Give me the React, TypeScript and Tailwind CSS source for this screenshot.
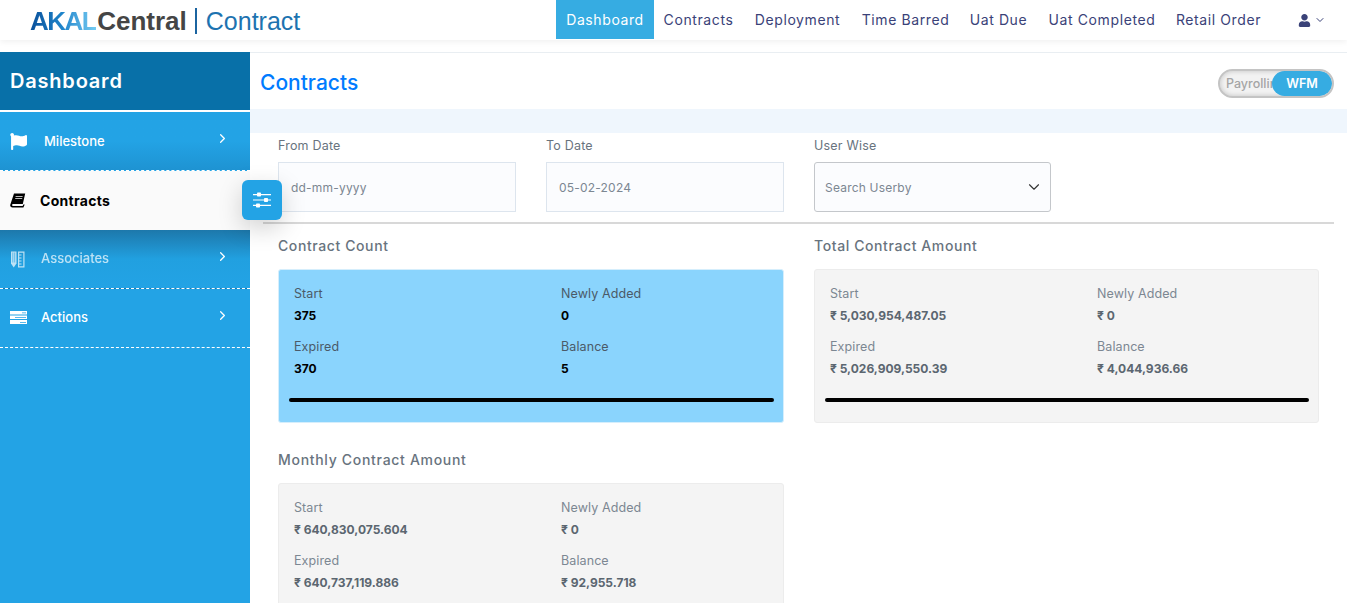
import { FaFlag, FaUser } from 'react-icons/fa';
import { LuChevronDown, LuChevronRight } from 'react-icons/lu';

const navItems: [string, string][] = [
  ['Dashboard', 'w-[98px]'],
  ['Contracts', 'w-[89px]'],
  ['Deployment', 'w-[109px]'],
  ['Time Barred', 'w-[107px]'],
  ['Uat Due', 'w-[79px]'],
  ['Uat Completed', 'w-[128px]'],
  ['Retail Order', 'w-[105px]'],
];

const BookIcon = () => (
  <svg width="16" height="15" viewBox="0 0 16 14" fill="currentColor">
    <path d="M4 0h11.200l-2.400 10.600H3.400c-.9 0-1.300.5-1.400 1 0 .5.4.9 1.100.9h9.600l.6-1.400h1.400L13.400 14H2.600C1 14 0 13 .2 11.600Z" />
    <path d="M5.600 2.400h7v.9h-7zM5.200 4.400h7v.9h-7z" fill="#fafafa" />
  </svg>
);

const RulerIcon = () => (
  <svg width="15" height="17" viewBox="0 0 15 16" fill="currentColor">
    <path d="M1 0h5.500v12L3.700 16 1 12Z" />
    <path d="M2.800 1v10M4.700 1v10" stroke="#23a3e5" strokeWidth=".6" />
    <path d="M8 0h6.500v16H8Zm1.200 1.200v13.600h4.100V1.200Z" />
    <path d="M9 3h2.500v1H9Zm0 3h2.500v1H9Zm0 3h2.500v1H9Zm0 3h2.500v1H9Z" />
  </svg>
);

const ListIcon = () => (
  <svg width="17" height="14" viewBox="0 0 17 14" fill="currentColor">
    <path d="M0 0h17v3.500H0ZM0 4.500h17V8H0ZM0 9h17v4H0Z" />
    <path d="M12 1.500h4v.7h-4zM5 6h11v.7H5zM10 11h6v.7h-6z" fill="#23a3e5" />
  </svg>
);

const SlidersIcon = () => (
  <svg width="18" height="16" viewBox="0 0 18 16" fill="currentColor">
    <path d="M0 2h18v1.200H0ZM0 7.400h18v1.200H0ZM0 12.800h18V14H0Z" />
    <rect x="4" y="0.500" width="4" height="4" rx="0.800" />
    <rect x="11" y="6" width="4" height="4" rx="0.800" />
    <rect x="3" y="11.500" width="4" height="4" rx="0.800" />
  </svg>
);

const SideItem = ({ label, icon, textClass, bg, dim }: { label: string; icon: React.ReactNode; textClass: string; bg: string; dim?: boolean }) => (
  <div className={`flex h-[59px] items-center border-b border-dashed border-white pl-[10px] pr-[20px] text-[13px] font-medium text-white ${bg}`}>
    <span className={`w-[17px] ${dim ? 'opacity-70' : ''}`}>{icon}</span>
    <span className={`${textClass} ${dim ? 'opacity-70' : ''}`}>{label}</span>
    <LuChevronRight className="ml-auto mb-[6px] text-[15px]" />
  </div>
);

const Stat = ({ label, value, dark }: { label: string; value: string; dark?: boolean }) => (
  <div className="h-[53px]">
    <div className={`text-[12.500px] leading-[18px] tracking-[0.100px] ${dark ? 'text-[#4b5a68]' : 'text-[#7c8792]'}`}>{label}</div>
    <div className={`mt-[4px] text-[12px] font-bold leading-[18px] ${dark ? 'text-black' : 'text-[#5b6670]'}`}>{value}</div>
  </div>
);

const StatCard = ({ stats, blue, line = true }: { stats: [string, string][]; blue?: boolean; line?: boolean }) => (
  <div className={`h-[154px] rounded-[3px] border px-[15px] pt-[15px] ${blue ? 'border-[#d5eefc] bg-[#8ad4fd]' : 'border-[#ececec] bg-[#f4f4f4]'}`}>
    <div className="grid grid-cols-[267px_1fr]">
      {stats.map(([label, value]) => (
        <Stat key={label} label={label} value={value} dark={blue} />
      ))}
    </div>
    {line && <div className="-ml-[5px] -mr-[6px] mt-[7px] h-[4px] rounded-full bg-black" />}
  </div>
);

const Field = ({ label, value, select }: { label: string; value: string; select?: boolean }) => (
  <div className={select ? 'w-[237px]' : 'w-[238px]'}>
    <div className="pt-[1px] text-[12.500px] leading-[17px] tracking-[0.200px] text-[#68737e]">{label}</div>
    <div className={`mt-[8px] flex h-[50px] items-center justify-between border bg-[#fbfcfe] pt-[2px] text-[12px] tracking-[0.200px] text-[#7c8792] ${select ? 'rounded-[3px] border-[#c4c7cb] pl-[10px] pr-[7px]' : 'border-[#dde5ee] pl-[12px]'}`}>
      {value}
      {select && <LuChevronDown strokeWidth={1.500} className="-mt-[2px] text-[18px] text-[#333]" />}
    </div>
  </div>
);

export default function App() {
  return (
    <div className="relative h-[603px] overflow-hidden bg-white font-['Inter','Liberation_Sans',sans-serif]">
      <header className="flex h-[40px] items-center bg-white pl-[30px] shadow-[0_2px_6px_rgba(0,0,0,0.06)]">
        <div className="flex items-center pt-[2px] font-['Liberation_Sans',sans-serif] text-[26px] leading-none">
          <span className="bg-gradient-to-r from-[#0a4f9a] via-[#1f86cc] to-[#74ccf2] bg-clip-text font-bold tracking-[-1.500px] text-transparent">AKAL</span>
          <span className="ml-[1px] font-bold text-[#454545]">Central</span>
          <span className="ml-[8px] h-[26px] w-[2px] bg-[#1b64a0]" />
          <span className="ml-[9px] text-[25px] text-[#1d73b0]">Contract</span>
        </div>
        <nav className="ml-auto flex h-full items-center">
          {navItems.map(([item, width], i) => (
            <div key={item} className={`flex h-[39px] items-center justify-center self-start text-[14px] tracking-[0.600px] ${width} ${i === 0 ? 'bg-[#36ace2] text-white' : 'text-[#3a4278]'}`}>
              {item}
            </div>
          ))}
        </nav>
        <div className="ml-[27px] mr-[21px] flex items-center gap-[3px] text-[#3a4278]">
          <FaUser className="text-[13px]" />
          <LuChevronDown className="text-[12px]" />
        </div>
      </header>

      <div className="mt-[12px] flex border-t border-[#e9eef2]">
        <aside className="-mt-px h-[552px] w-[250px] shrink-0 bg-[#23a3e5]">
          <div className="flex h-[58px] items-center bg-[#0870a8] pl-[10px] text-[20px] font-semibold tracking-[0.800px] text-white">Dashboard</div>
          <div className="h-[2px] bg-white" />
          <SideItem label="Milestone" icon={<FaFlag className="text-[17px]" />} textClass="ml-[17px] mt-[2px]" bg="bg-gradient-to-b from-[#23a3e5] via-[#23a3e5] to-[#1e93d2]" />
          <div className="flex h-[59px] items-center bg-[#fafafa] pb-[1px] pl-[10px] text-[14px] font-bold tracking-[0.300px] text-black">
            <span className="w-[17px]"><BookIcon /></span>
            <span className="ml-[13px]">Contracts</span>
          </div>
          <SideItem label="Associates" icon={<RulerIcon />} textClass="ml-[14px]" bg="bg-gradient-to-b from-[#1d78ab] via-[#21a0e0] to-[#23a3e5]" dim />
          <SideItem label="Actions" icon={<ListIcon />} textClass="ml-[14px]" bg="bg-[#23a3e5]" />
        </aside>

        <main className="min-w-0 flex-1">
          <div className="flex h-[56px] items-center justify-between pl-[10px] pr-[13px] pt-[4px]">
            <h1 className="text-[21px] font-medium text-[#007bff]">Contracts</h1>
            <div className="relative flex h-[29px] w-[116px] items-center overflow-hidden rounded-full border-2 border-[#c4c4c4] bg-[#f2f2f2] pl-[6px] pt-[2px] text-[12.500px] font-medium text-[#a5a5a5] shadow-[inset_0_0_5px_rgba(0,0,0,0.2)]">
              Payrolling
              <span className="absolute right-0 top-0 flex h-full w-[60px] items-center justify-center rounded-full bg-[#36ace2] pt-[2px] font-semibold text-white">WFM</span>
            </div>
          </div>
          <div className="h-[24px] bg-[#eff6fd]" />
          <div className="pl-[28px] pr-[13px]">
            <div className="flex gap-[30px] pt-[3px]">
              <Field label="From Date" value="dd-mm-yyyy" />
              <Field label="To Date" value="05-02-2024" />
              <Field label="User Wise" value="Search Userby" select />
            </div>
            <div className="-ml-[15px] mt-[10px] h-[2px] bg-[#d8d8d8]" />
            <div className="mt-[12px] flex gap-[30px]">
              <section className="w-[506px]">
                <h2 className="text-[14px] font-medium leading-[20px] tracking-[0.600px] text-[#68737e]">Contract Count</h2>
                <div className="mt-[13px]">
                  <StatCard blue stats={[['Start', '375'], ['Newly Added', '0'], ['Expired', '370'], ['Balance', '5']]} />
                </div>
              </section>
              <section className="w-[505px]">
                <h2 className="text-[14px] font-medium leading-[20px] tracking-[0.600px] text-[#68737e]">Total Contract Amount</h2>
                <div className="mt-[13px]">
                  <StatCard stats={[['Start', '₹ 5,030,954,487.05'], ['Newly Added', '₹ 0'], ['Expired', '₹ 5,026,909,550.39'], ['Balance', '₹ 4,044,936.66']]} />
                </div>
              </section>
            </div>
            <section className="mt-[27px] w-[506px]">
              <h2 className="text-[14px] font-medium leading-[20px] tracking-[0.700px] text-[#68737e]">Monthly Contract Amount</h2>
              <div className="mt-[13px]">
                <StatCard line={false} stats={[['Start', '₹ 640,830,075.604'], ['Newly Added', '₹ 0'], ['Expired', '₹ 640,737,119.886'], ['Balance', '₹ 92,955.718']]} />
              </div>
            </section>
          </div>
        </main>
      </div>

      <button className="absolute left-[242px] top-[180px] z-20 flex h-[40px] w-[40px] items-center justify-center rounded-[6px] bg-[#23a3e5] text-white shadow-[0_8px_24px_rgba(0,0,0,0.18)]">
        <SlidersIcon />
      </button>
    </div>
  );
}
